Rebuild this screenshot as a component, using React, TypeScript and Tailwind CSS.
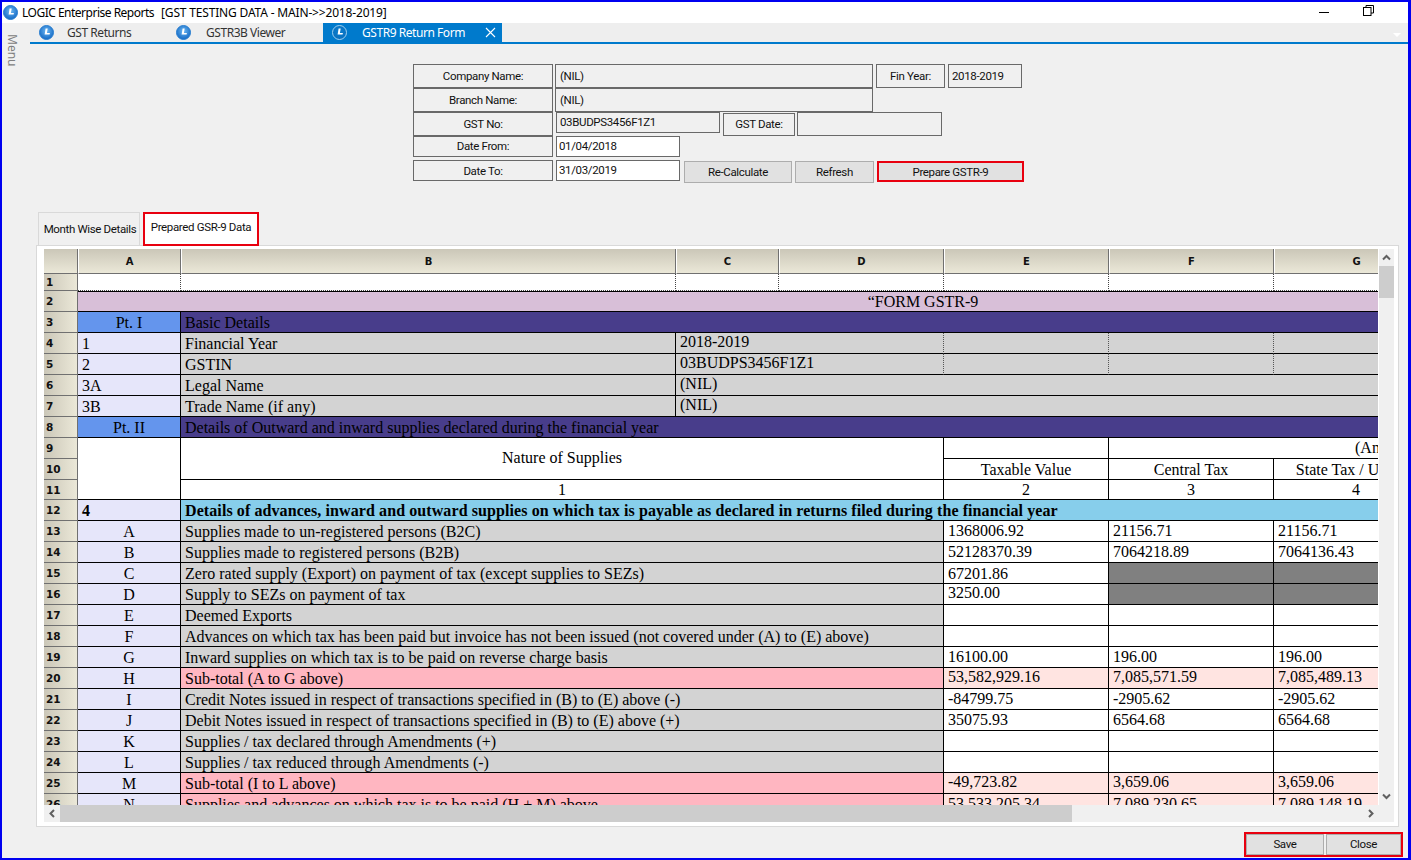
import React from "react";

const Logo = ({ active = false }: { active?: boolean }) => (
  <svg width="15" height="15" viewBox="0 0 15 15" className="shrink-0">
    <defs>
      <radialGradient id={active ? "lga" : "lgb"} cx="50%" cy="40%" r="60%">
        <stop offset="0%" stopColor={active ? "#0a7fd0" : "#6db8f2"} />
        <stop offset="100%" stopColor={active ? "#0a6fbd" : "#1268c4"} />
      </radialGradient>
    </defs>
    <circle cx="7.5" cy="7.5" r="7" fill={`url(#${active ? "lga" : "lgb"})`} stroke={active ? "#9fd0f0" : "#2a7fd0"} strokeWidth="1" />
    <path d="M6.6 3.6 L5.6 9.6 L10.6 9.6 L10.9 8 L7.9 8 L8.7 3.6 Z" fill="#fff" />
  </svg>
);

const Chev = ({ d }: { d: string }) => (
  <svg width="9" height="9" viewBox="0 0 9 9" fill="none" stroke="#606060" strokeWidth="2">
    <path d={d} />
  </svg>
);

const Box = ({ className, children }: { className: string; children?: React.ReactNode }) => (
  <div className={`flex items-center border border-[#696969] shrink-0 ${className}`}>{children}</div>
);

const Label = ({ className, children }: { className: string; children: React.ReactNode }) => (
  <Box className={`justify-center ${className}`}>{children}</Box>
);

const Btn = ({ className, children }: { className: string; children: React.ReactNode }) => (
  <div className={`flex items-center justify-center bg-[#e1e1e1] shrink-0 ${className}`}>{children}</div>
);

const Cell = ({ className = "", children }: { className?: string; children?: React.ReactNode }) => (
  <div className={`flex min-w-0 overflow-hidden whitespace-nowrap border-r border-b border-black pl-[4px] ${className}`}>{children}</div>
);

const RH = ({ n, className = "" }: { n: number; className?: string }) => (
  <div className={`col-start-1 flex items-center pl-[2px] bg-gradient-to-r from-[#cbc7b8] to-[#ebe8d8] border-b border-r border-b-[#707070] border-r-[#707070] font-['DejaVu_Sans'] font-bold text-[10.5px] text-[#111] ${className}`}>{n}</div>
);

const CH = ({ c }: { c: string }) => (
  <div className="flex items-center justify-center bg-gradient-to-b from-[#cbc7b8] to-[#ebe8d8] border-b border-r border-b-[#707070] border-r-[#707070] border-l border-l-white pt-[2px] font-['DejaVu_Sans'] font-bold text-[10px] text-[#111]">{c}</div>
);

const LAV = "bg-[#e6e6fa] items-end justify-center pl-0 pr-[4px]";
const LAVL = "bg-[#e6e6fa] items-end";
const GR = "bg-[#d3d3d3] items-end";
const DOT = "bg-[#d3d3d3] border-r-[#555] [border-right-style:dotted]";
const CEN = "justify-center bg-white pl-0 pr-[4px]";

type Row = { n: number; a: string; label: string; v?: [string, string, string]; grey?: boolean; sub?: boolean; up?: boolean };

const rows: Row[] = [
  { n: 13, a: "A", label: "Supplies made to un-registered persons (B2C)", v: ["1368006.92", "21156.71", "21156.71"] },
  { n: 14, a: "B", label: "Supplies made to registered persons (B2B)", v: ["52128370.39", "7064218.89", "7064136.43"] },
  { n: 15, a: "C", label: "Zero rated supply (Export) on payment of tax (except supplies to SEZs)", v: ["67201.86", "", ""], grey: true },
  { n: 16, a: "D", label: "Supply to SEZs on payment of tax", v: ["3250.00", "", ""], grey: true, up: true },
  { n: 17, a: "E", label: "Deemed Exports" },
  { n: 18, a: "F", label: "Advances on which tax has been paid but invoice has not been issued (not covered under (A) to (E) above)" },
  { n: 19, a: "G", label: "Inward supplies on which tax is to be paid on reverse charge basis", v: ["16100.00", "196.00", "196.00"] },
  { n: 20, a: "H", label: "Sub-total (A to G above)", v: ["53,582,929.16", "7,085,571.59", "7,085,489.13"], sub: true, up: true },
  { n: 21, a: "I", label: "Credit Notes issued in respect of transactions specified in (B) to (E) above (-)", v: ["-84799.75", "-2905.62", "-2905.62"] },
  { n: 22, a: "J", label: "Debit Notes issued in respect of transactions specified in (B) to (E) above (+)", v: ["35075.93", "6564.68", "6564.68"] },
  { n: 23, a: "K", label: "Supplies / tax declared through Amendments (+)" },
  { n: 24, a: "L", label: "Supplies / tax reduced through Amendments (-)" },
  { n: 25, a: "M", label: "Sub-total (I to L above)", v: ["-49,723.82", "3,659.06", "3,659.06"], sub: true, up: true },
  { n: 26, a: "N", label: "Supplies and advances on which tax is to be paid (H + M) above", v: ["53,533,205.34", "7,089,230.65", "7,089,148.19"], sub: true },
];

function dataCell(r: Row, i: number) {
  const text = r.v ? r.v[i] : "";
  const grey = r.grey && i > 0;
  const bg = grey ? "bg-[#808080]" : r.sub ? "bg-[#ffe4e1]" : "bg-white";
  const al = r.n === 15 ? "items-end" : r.up ? "items-center pb-[2px]" : "items-center";
  return <Cell key={i} className={`${bg} ${al}`}>{text}</Cell>;
}

export default function App() {
  return (
    <div className="flex h-[860px] w-[1411px] flex-col overflow-hidden border-t-2 border-b-2 border-l-2 border-r-[3px] border-[#0000f0] bg-[#f0f0f0] font-['Roboto',sans-serif] text-[11.5px] tracking-[-0.35px] text-[#111]">
      {/* title bar */}
      <div className="flex h-[21px] shrink-0 items-center bg-white pl-[1px]">
        <Logo />
        <span className="ml-[4px] whitespace-pre font-['Noto_Sans',sans-serif] text-[12px] tracking-[-0.5px] text-black">LOGIC Enterprise Reports</span>
        <span className="ml-[7px] whitespace-pre font-['Noto_Sans',sans-serif] text-[12px] tracking-[-0.17px] text-black">[GST TESTING DATA - MAIN-&gt;&gt;2018-2019]</span>
        <div className="ml-auto flex items-center">
          <div className="mr-[34px] h-px w-[10px] bg-black" />
          <svg width="11" height="11" viewBox="0 0 11 11" fill="none" stroke="#000" className="mb-[4px] mr-[34px]">
            <rect x="0.5" y="2.5" width="7.5" height="8" fill="#fff" />
            <path d="M3 2.5V0.5H10.5V8H8" />
          </svg>
        </div>
      </div>

      <div className="flex min-h-0 flex-1">
        {/* side strip */}
        <div className="w-[28px] shrink-0 pl-[3px] pt-[11px]">
          <div className="font-['Noto_Sans',sans-serif] text-[12px] leading-[14px] tracking-normal text-[#808080] [writing-mode:vertical-rl]">Menu</div>
        </div>

        <div className="flex min-w-0 flex-1 flex-col">
          {/* document tabs */}
          <div className="flex h-[21px] shrink-0 items-stretch whitespace-nowrap border-b-2 border-[#007acc] bg-[#eeeeee] font-['Noto_Sans',sans-serif] text-[12px] tracking-[-0.45px] text-[#333]">
            <div className="flex w-[138px] items-center gap-[13px] pl-[9px]"><Logo />GST Returns</div>
            <div className="flex w-[155px] items-center gap-[15px] pl-[8px]"><Logo />GSTR3B Viewer</div>
            <div className="flex w-[179px] items-center gap-[15px] bg-[#007acc] pl-[9px] text-white">
              <Logo active />GSTR9 Return Form
              <svg width="11" height="11" viewBox="0 0 11 11" stroke="#fff" strokeWidth="1.1" className="ml-auto mr-[6px]"><path d="M1 1L10 10M10 1L1 10" /></svg>
            </div>
            <div className="ml-auto mr-[7px] mt-[10px] h-0 w-0 border-x-[4px] border-t-[4px] border-x-transparent border-t-white" />
          </div>

          {/* header form */}
          <div className="ml-[383px] mt-[20px] flex shrink-0 flex-col">
            <div className="flex h-[24px] items-stretch">
              <Label className="w-[140px] pt-px">Company Name:</Label>
              <Box className="ml-[2px] w-[318px] pl-[4px] pt-px">(NIL)</Box>
              <Label className="ml-[3px] w-[69px] pt-px">Fin Year:</Label>
              <Box className="ml-[3px] w-[74px] pl-[3px] pt-px">2018-2019</Box>
            </div>
            <div className="flex h-[24px] items-stretch">
              <Label className="w-[140px] pt-px">Branch Name:</Label>
              <Box className="ml-[2px] w-[318px] pl-[4px] pt-px">(NIL)</Box>
            </div>
            <div className="flex h-[24px] items-start">
              <Label className="h-[24px] w-[140px] pt-px">GST No:</Label>
              <Box className="ml-[3px] h-[21px] w-[164px] pl-[3px]">03BUDPS3456F1Z1</Box>
              <Label className="ml-[3px] mt-px h-[23px] w-[72px] pt-px">GST Date:</Label>
              <Box className="ml-[2px] h-[24px] w-[145px]" />
            </div>
            <div className="flex h-[21px] items-stretch">
              <Label className="w-[140px] pt-px">Date From:</Label>
              <Box className="ml-[3px] w-[124px] bg-white pl-[2px]">01/04/2018</Box>
            </div>
            <div className="mt-[3px] flex h-[23px] items-start">
              <Label className="h-[21px] w-[140px] pt-[2px]">Date To:</Label>
              <Box className="ml-[3px] h-[21px] w-[124px] bg-white pl-[2px]">31/03/2019</Box>
              <Btn className="ml-[4px] mt-px h-[22px] w-[108px] border border-[#adadad] pt-px">Re-Calculate</Btn>
              <Btn className="ml-[3px] mt-px h-[22px] w-[79px] border border-[#adadad] pt-px">Refresh</Btn>
              <Btn className="ml-[3px] mt-px h-[21px] w-[147px] border-2 border-[#e8000f] pt-[2px]">Prepare GSTR-9</Btn>
            </div>
          </div>

          {/* section tabs */}
          <div className="ml-[8px] mt-[29px] flex h-[33px] shrink-0 items-stretch whitespace-nowrap">
            <div className="flex w-[102px] items-center justify-center border border-b-0 border-[#d9d9d9] pl-[2px] pt-[2px]">Month Wise Details</div>
            <div className="relative z-10 ml-[3px] flex h-[34px] w-[116px] items-start justify-center border-2 border-[#e8000f] bg-white pt-[5px]">Prepared GSR-9 Data</div>
          </div>

          {/* panel */}
          <div className="ml-[6px] flex h-[582px] w-[1363px] shrink-0 flex-col border border-[#d9d9d9] bg-white pl-[7px] pt-[3px]">
            <div className="flex h-[556px] shrink-0">
              <div className="h-[556px] w-[1334px] shrink-0 overflow-hidden font-['Liberation_Serif',serif] text-[16px] leading-[18px] tracking-normal text-black">
                <div className="grid w-max grid-cols-[34px_103px_495px_103px_165px_165px_165px_165px_330px] grid-rows-[25px_17px_21px_21px_21px_21px_21px_21px_21px_21px_21px_20px_repeat(15,21px)]">
                  <div className="bg-gradient-to-b from-[#cbc7b8] to-[#ebe8d8] border-b border-r border-[#707070]" />
                  {["A", "B", "C", "D", "E", "F", "G", "H"].map((c) => <CH key={c} c={c} />)}

                  <RH n={1} />
                  {[0, 1, 2, 3, 4, 5, 6, 7].map((i) => (
                    <div key={i} className="border-b border-r border-dotted border-[#444] bg-white" />
                  ))}

                  <RH n={2} />
                  <Cell className="col-span-8 items-center justify-center border-t bg-[#d8bfd8] pl-0 pr-[4px]">“FORM GSTR-9</Cell>

                  <RH n={3} />
                  <Cell className="items-center justify-center bg-[#6495ed] pl-0 pr-[4px] pt-[2px]">Pt. I</Cell>
                  <Cell className="col-span-7 items-end bg-[#483d8b]">Basic Details</Cell>

                  <RH n={4} />
                  <Cell className={LAVL}>1</Cell>
                  <Cell className={`${GR} pt-px`}>Financial Year</Cell>
                  <Cell className={`col-span-2 items-center pb-[2px] ${DOT}`}>2018-2019</Cell>
                  <Cell className={DOT} /><Cell className={DOT} /><Cell className={`col-span-2 ${DOT}`} />

                  <RH n={5} />
                  <Cell className={LAVL}>2</Cell>
                  <Cell className={GR}>GSTIN</Cell>
                  <Cell className={`col-span-2 items-center pb-[2px] ${DOT}`}>03BUDPS3456F1Z1</Cell>
                  <Cell className={DOT} /><Cell className={DOT} /><Cell className={`col-span-2 ${DOT}`} />

                  <RH n={6} />
                  <Cell className={LAVL}>3A</Cell>
                  <Cell className={GR}>Legal Name</Cell>
                  <Cell className="col-span-6 items-center bg-[#d3d3d3] pb-[2px]">(NIL)</Cell>

                  <RH n={7} />
                  <Cell className={LAVL}>3B</Cell>
                  <Cell className={GR}>Trade Name (if any)</Cell>
                  <Cell className="col-span-6 items-center bg-[#d3d3d3] pb-[2px]">(NIL)</Cell>

                  <RH n={8} />
                  <Cell className="items-center justify-center bg-[#6495ed] pl-0 pr-[4px] pt-[2px]">Pt. II</Cell>
                  <Cell className="col-span-7 items-end bg-[#483d8b]">Details of Outward and inward supplies declared during the financial year</Cell>

                  <RH n={9} />
                  <Cell className="row-span-3 bg-white" />
                  <Cell className={`col-span-3 row-span-2 items-center pb-[1px] ${CEN}`}>Nature of Supplies</Cell>
                  <Cell className="bg-white" />
                  <Cell className="col-span-3 items-center justify-start bg-white pb-[1px] pl-[246px]">(Amount in ₹ in all tables)</Cell>

                  <RH n={10} />
                  <Cell className={`col-start-6 items-end ${CEN}`}>Taxable Value</Cell>
                  <Cell className={`items-end ${CEN}`}>Central Tax</Cell>
                  <Cell className={`items-end ${CEN}`}>State Tax / UT Tax</Cell>
                  <Cell className="bg-white" />

                  <RH n={11} />
                  <Cell className={`col-span-3 col-start-3 items-center ${CEN}`}>1</Cell>
                  <Cell className={`items-center ${CEN}`}>2</Cell>
                  <Cell className={`items-center ${CEN}`}>3</Cell>
                  <Cell className={`items-center ${CEN}`}>4</Cell>
                  <Cell className="bg-white" />

                  <RH n={12} />
                  <Cell className="items-end bg-[#e6e6fa] font-bold">4</Cell>
                  <Cell className="col-span-7 items-end bg-[#87ceeb] font-bold tracking-[0.09px]">Details of advances, inward and outward supplies on which tax is payable as declared in returns filed during the financial year</Cell>

                  {rows.map((r) => (
                    <React.Fragment key={r.n}>
                      <RH n={r.n} />
                      <Cell className={LAV}>{r.a}</Cell>
                      <Cell className={`col-span-3 items-end ${r.sub ? "bg-[#ffb6c1]" : "bg-[#d3d3d3]"}`}>{r.label}</Cell>
                      {[0, 1, 2].map((i) => dataCell(r, i))}
                      <Cell className={r.sub ? "bg-[#ffe4e1]" : "bg-white"} />
                    </React.Fragment>
                  ))}
                </div>
              </div>
              {/* vertical scrollbar */}
              <div className="ml-px flex w-[15px] shrink-0 flex-col bg-[#f0f0f0]">
                <div className="flex h-[17px] items-center justify-center"><Chev d="M1 6.5L4.5 3L8 6.5" /></div>
                <div className="h-[32px] bg-[#cdcdcd]" />
                <div className="mt-auto flex h-[17px] items-center justify-center"><Chev d="M1 2.5L4.5 6L8 2.5" /></div>
              </div>
            </div>
            {/* horizontal scrollbar */}
            <div className="flex h-[17px] w-[1350px] shrink-0 items-stretch bg-[#f0f0f0]">
              <div className="flex w-[16px] items-center justify-center"><Chev d="M6 1L2.5 4.5L6 8" /></div>
              <div className="w-[1012px] bg-[#cdcdcd]" />
              <div className="ml-auto mr-[16px] flex w-[16px] items-center justify-center"><Chev d="M3 1L6.5 4.5L3 8" /></div>
            </div>
          </div>

          {/* footer buttons */}
          <div className="mr-[5px] mt-[5px] flex h-[25px] w-[159px] shrink-0 self-end gap-[2px] border-2 border-[#e8000f]">
            <Btn className="w-[78px] border border-[#adadad] pt-px">Save</Btn>
            <Btn className="flex-1 border border-[#adadad] pt-px">Close</Btn>
          </div>
        </div>
      </div>
    </div>
  );
}
